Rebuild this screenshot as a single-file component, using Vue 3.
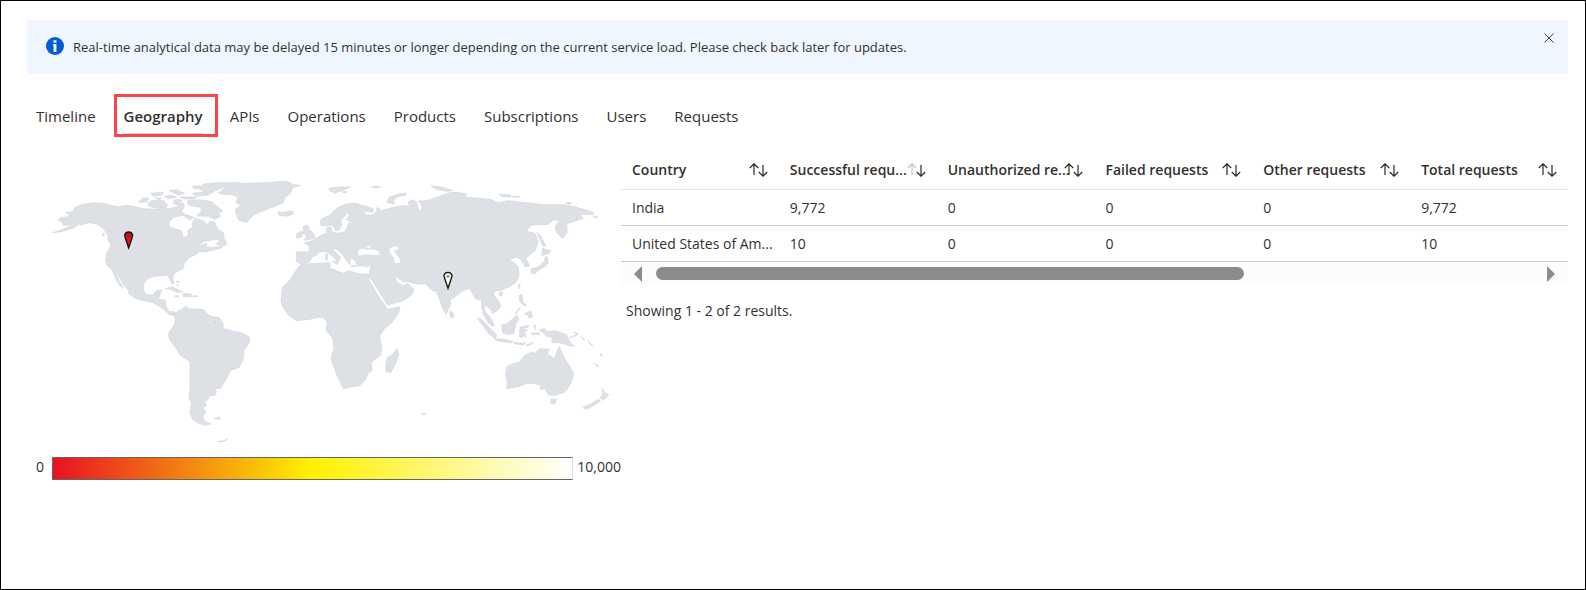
<script setup>
import { ref } from 'vue'

const tabs = ['Timeline', 'Geography', 'APIs', 'Operations', 'Products', 'Subscriptions', 'Users', 'Requests']
const activeTab = ref('Geography')
const bannerOpen = ref(true)

const columns = [
  { label: 'Country' },
  { label: 'Successful requ...', descending: true },
  { label: 'Unauthorized re...' },
  { label: 'Failed requests' },
  { label: 'Other requests' },
  { label: 'Total requests' },
]
const rows = [
  ['India', '9,772', '0', '0', '0', '9,772'],
  ['United States of Am...', '10', '0', '0', '0', '10'],
]
</script>

<template>
  <main class="page">
    <section v-if="bannerOpen" class="banner" role="status">
      <svg class="info" viewBox="0 0 18 18" aria-hidden="true">
        <circle cx="9" cy="9" r="9" fill="#015cda" />
        <path d="M7.500 3.200h3v2.600h-3zM7 7h3.400v8H7.600V8.500H7z" fill="#fff" />
      </svg>
      <p>Real-time analytical data may be delayed 15 minutes or longer depending on the current service load. Please check back later for updates.</p>
      <button class="close" type="button" aria-label="Close" @click="bannerOpen = false">
        <svg viewBox="0 0 10 10" width="10" height="10"><path d="M.5 .5l9 9M9.500 .5l-9 9" stroke="#444" fill="none" /></svg>
      </button>
    </section>

    <nav class="tabs" role="tablist">
      <button
        v-for="tab in tabs"
        :key="tab"
        type="button"
        role="tab"
        class="tab"
        :class="{ active: tab === activeTab }"
        :aria-selected="tab === activeTab"
        @click="activeTab = tab"
      ><span>{{ tab }}</span></button>
    </nav>

    <div class="content">
      <section class="geo">
        <svg class="map" viewBox="0 0 1740 810" role="img" aria-label="World map of requests">
          <g class="land">
            <path d="M38 188L60 181L85 172L95 166L70 166L65 155L54 150L62 142L80 141L90 136L77 128L100 124L105 112L125 104L160 98L195 101L215 107L235 110L260 106L285 110L310 116L345 118L375 117L410 112L415 104L428 97L433 108L425 125L437 135L420 138L400 142L388 155L386 168L400 175L425 182L430 200L440 202L445 190L442 182L458 172L456 160L466 145L490 152L503 165L510 153L525 158L532 178L550 188L553 200L545 208L515 210L490 215L470 230L500 220L498 232L520 232L548 228L545 234L520 240L500 246L480 244L465 255L448 262L433 280L430 295L400 312L398 325L402 340L396 342L388 325L384 315L365 318L345 318L325 325L312 340L310 360L320 374L340 375L348 362L365 360L360 375L355 388L375 390L378 410L388 425L400 424L408 430L400 436L390 435L375 422L360 410L340 398L310 392L285 385L265 370L267 362L255 350L245 335L232 310L228 310L236 330L245 345L250 353L238 345L228 328L222 312L215 298L202 288L197 270L200 250L208 235L215 220L205 208L203 195L190 175L170 162L145 158L125 165L115 163L105 172L88 178L60 186Z" />
            <path d="M528 222L546 204L554 206L560 222L548 228ZM186 190h8l-3 10ZM203 208l13 12 -3 4Z" />
            <path d="M325 100L335 91L370 91L382 105L377 115L345 114L325 108ZM295 97L310 83L327 85L320 96ZM332 70L370 66L366 75L340 79ZM372 79L395 76L411 82L385 86ZM388 62L410 59L434 70L415 76ZM400 92L415 88L426 92L412 105L402 101ZM420 81L470 81L465 88L430 86ZM345 83l20 2-8 6z" />
            <g transform="translate(330 0)">
              <path d="M113 92L150 89L185 95L219 124L205 128L210 140L195 148L175 139L140 138L155 122L150 112L130 108L115 105ZM105 133L132 142L120 149L105 142ZM160 42L200 38L272 38L240 48L215 55L195 62L175 75L140 79L127 70L165 65L148 56ZM125 49l25-2 4 7-20 3z" />
              <path d="M205 68L225 55L280 40L345 38L400 34L425 38L420 43L452 46L430 52L420 70L405 82L400 98L385 105L345 120L310 135L290 158L265 150L255 120L272 105L258 97L264 80L245 74L212 72Z" />
              <path d="M383 125L398 128L425 122L431 131L410 139L388 136ZM45 356L65 350L98 366L80 367L62 358ZM98 371L120 371L130 379L100 381ZM75 377h11v3h-11ZM133 377h9v3h-9ZM78 333l11 2-4 4ZM80 342l5 5-2 2Z" />
            </g>
            <g transform="translate(330 360)">
              <path d="M64 70L75 72L82 64L95 58L108 47L115 56L160 58L170 70L185 80L205 82L218 97L220 115L245 122L280 130L298 141L300 155L282 180L280 205L268 232L240 242L232 262L212 295L192 296L200 305L195 315L178 318L175 328L163 335L170 345L158 355L167 365L158 380L165 395L182 402L165 406L145 400L128 388L120 370L124 340L117 325L120 300L120 215L90 195L75 170L58 148L56 130L75 100L75 80Z" />
              <path d="M193 385L211 382L209 387L196 388Z" />
            </g>
            <g transform="translate(690 240)">
              <path d="M92 45L100 42L180 38L180 55L220 70L235 62L270 72L290 72L299 80L296 88L325 138L346 168L352 178L390 170L385 190L368 215L345 235L328 260L335 290L333 315L305 335L306 360L292 372L288 388L270 406L240 412L220 416L212 400L200 375L183 325L192 295L188 265L168 240L172 215L158 202L145 202L120 208L80 212L55 195L38 170L33 150L38 110L60 90L75 65Z" />
              <path d="M380 296L387 312L375 345L362 368L348 364L347 345L353 322L370 312ZM456 491h10v3h-10Z" />
            </g>
            <g transform="translate(690 0)">
              <path d="M79 245L118 246L118 228L103 218L125 214L145 200L160 192L172 190L167 175L182 170L186 186L200 190L225 185L232 170L235 160L260 158L238 154L230 148L241 130L230 132L212 150L215 165L208 180L198 182L190 170L185 165L165 168L152 165L152 148L180 135L200 115L225 103L255 99L285 108L310 116L308 128L280 122L286 135L308 135L318 125L322 112L335 122L350 117L380 110L400 106L418 110L415 95L430 89L440 97L446 118L455 124L455 108L445 93L470 92L500 82L520 75L540 68L560 66L590 72L585 82L620 84L660 88L685 98L715 92L770 98L820 104L880 104L920 112L968 126L970 134L930 133L940 145L910 155L890 162L892 185L878 206L858 185L856 168L869 152L850 150L835 163L785 165L768 184L795 190L805 215L795 242L775 258L768 265L779 288L765 290L753 268L738 262L716 270L730 276L745 290L747 315L740 335L720 350L692 361L672 364L672 375L684 390L693 408L685 420L668 430L660 414L642 405L645 425L660 440L673 467L660 460L646 438L637 420L634 390L617 387L598 355L575 365L542 390L540 410L528 432L518 415L500 365L485 360L468 342L440 342L415 335L400 335L372 316L380 335L400 348L412 340L432 358L425 375L400 392L352 405L340 385L318 350L298 318L292 318L298 310L303 283L280 288L262 288L256 272L242 262L240 285L232 275L215 250L195 235L187 238L212 262L205 276L190 262L172 245L150 245L140 255L125 262L118 276L95 283L79 275Z" />
              <path d="M100 170L112 165L118 178L132 192L134 205L102 211L110 200L100 188ZM80 192L95 183L100 190L94 202L80 204ZM186 273L203 275L200 284ZM167 252l5-3 1 21-6-1ZM243 287h14v3h-14ZM287 289l12-3-8 6Z" />
              <path d="M176 55L205 51L242 51L225 58L195 70L180 62ZM215 65h18l-8 4ZM305 49h28l-8 4h-12ZM350 98L358 82L385 72L410 69L408 75L380 82L370 92L375 101ZM483 48L520 52L548 62L530 64L500 58ZM688 73L720 74L725 81L695 80ZM728 79h20v3h-20ZM888 98h17l-3 4h-10ZM970 138l14 3-10 2Z" />
              <path d="M800 188L812 198L828 228L820 230L808 205ZM818 235L842 243L835 252L815 256ZM827 258L834 264L834 280L824 290L806 300L795 312L785 310L782 298L805 290L822 275ZM745 343h6l-4 14ZM688 366l10 0-3 10-7 2ZM540 422L550 430L552 440L544 444L539 434Z" />
              <path d="M748 375h9l1 20 12 12-8 0-13-12ZM762 432l20-10 6 18-10 4-6-10ZM748 413l-12 17 3 0 11-15Z" />
            </g>
            <g transform="translate(1200 300)">
              <path d="M111 144L125 148L150 175L170 195L166 208L145 190L125 162ZM128 128L140 138L158 158L158 168L145 160ZM165 208L190 207L218 214L215 219L180 214ZM222 217L250 220L256 216 252 225L225 222ZM258 226L280 217L270 225ZM185 165L200 162L220 145L230 134L236 148L228 160L222 190L205 194L188 188ZM240 172L268 166L265 171L248 176L263 180L253 187L258 202L248 195L245 204L238 200ZM281 163l6 4 0 12-4-5ZM275 189h24v4h-24Z" />
              <path d="M298 180L315 176L320 185L345 182L380 194L385 208L402 230L380 225L360 218L335 218L338 204L318 198L312 190ZM388 205L410 196L414 190L402 186L410 193 390 202ZM424 200l10 8-3 1ZM443 212l17 16-5 0ZM482 249l5 10-4 0ZM463 279l14 11-4 1Z" />
              <path d="M200 290L215 282L240 276L252 258L275 246L285 250L298 236L328 238L322 252L345 266L352 240L358 229L372 262L390 290L401 310L395 335L380 360L370 368L355 372L345 376L325 375L315 356L300 358L302 345L280 340L262 340L235 350L200 356L202 340L197 310ZM333 387L351 388L343 402L333 400ZM486 354L494 368L507 374L490 390L480 382L489 374ZM475 388L482 394L455 410L438 418L429 412L455 400Z" />
            </g>
          </g>
          <path class="islet" d="M535 815L548 813L563 806L558 811L546 815Z" />
          <g class="water" transform="translate(690 0)">
            <path d="M263 252L268 238L280 236L290 240L305 238L325 242L330 254L305 255L285 252L270 257ZM286 231l15-4 5-1-8 9ZM358 238L372 229L384 230L385 237L372 243L386 262L392 278L375 280L372 265L360 250ZM447 96l6 12-2 14-4-12Z" />
          </g>
          <g class="lakes">
            <path d="M524 453l4 3-2 5-3-3ZM938 428h4v2h-4ZM989 425h3v3h-3ZM967 504l4 5h-2Z" />
          </g>
          <g transform="translate(266 185)">
            <path class="pin" d="M0 49L-9 22Q-12 14-12 10Q-9 1 0 1Q9 1 12 10Q12 14 9 22Z" fill="#e81123" />
            <circle cx="0" cy="13" r="5" fill="#8b1a20" />
          </g>
          <g transform="translate(1224 306)">
            <path class="pin" d="M0 49L-9 22Q-12 14-12 10Q-9 1 0 1Q9 1 12 10Q12 14 9 22Z" fill="#fffff0" />
            <circle cx="0" cy="13" r="5" fill="#999" />
          </g>
        </svg>
        <div class="legend">
          <span>0</span>
          <div class="scale"></div>
          <span>10,000</span>
        </div>
      </section>

      <section class="results">
        <table>
          <thead>
            <tr>
              <th v-for="col in columns" :key="col.label" scope="col">
                <div class="head">
                  <span>{{ col.label }}</span>
                  <button type="button" class="sort" :aria-label="'Sort by ' + col.label">
                    <svg viewBox="0 0 19 14" width="19" height="14" fill="none" stroke="#292827">
                      <path d="M5 12V1M.8 5L5 .8L9.200 5" :class="{ muted: col.descending }" stroke-width="1.200" />
                      <path d="M14 2v11M9.800 9L14 13.200L18.200 9" stroke-width="1.200" />
                    </svg>
                  </button>
                </div>
              </th>
            </tr>
          </thead>
          <tbody>
            <tr v-for="row in rows" :key="row[0]">
              <td v-for="(cell, i) in row" :key="i">{{ cell }}</td>
            </tr>
          </tbody>
        </table>
        <div class="scrollbar">
          <button type="button" aria-label="Scroll left"><svg viewBox="0 0 8 16" width="8" height="16"><path d="M8 0v16L0 8z" fill="#8b8b8b" /></svg></button>
          <div class="track"><div class="thumb"></div></div>
          <button type="button" aria-label="Scroll right"><svg viewBox="0 0 8 16" width="8" height="16"><path d="M0 0v16l8-8z" fill="#8b8b8b" /></svg></button>
        </div>
        <p class="summary">Showing 1 - 2 of 2 results.</p>
      </section>
    </div>
  </main>
</template>

<style>
body { background: #fff; }
</style>

<style scoped>
.page {
  box-sizing: border-box;
  min-height: 100vh;
  padding: 19px 17px 19px 26px;
  border: 1px solid #000;
  background: #fff;
  color: #323130;
  font-family: "Open Sans", "Noto Sans", sans-serif;
  font-size: 14px;
  line-height: 20px;
}
p { margin: 0; }
button {
  padding: 0;
  border: 0;
  background: none;
  color: inherit;
  font: inherit;
  cursor: pointer;
}
svg { display: block; }

.banner {
  display: flex;
  align-items: flex-start;
  gap: 9px;
  min-height: 54px;
  box-sizing: border-box;
  padding: 17px 14px 17px 19px;
  border-radius: 2px;
  background: #eff6ff;
  font-size: 13px;
}
.info { flex: none; width: 18px; height: 18px; }
.banner p { flex: 1; }
.close { flex: none; margin-top: -4px; }

.tabs {
  display: flex;
  height: 43px;
  margin-top: 20px;
  font-size: 15px;
}
.tab {
  box-sizing: border-box;
  padding: 0 14px;
}
.tab:first-child { padding-left: 9px; }
.tab span {
  display: block;
  padding-top: 2px;
  line-height: 41px;
}
.tab.active {
  margin: 0 -2px 0 4px;
  padding: 0 12px 0 7px;
  border: 3px solid #fc4346;
  font-weight: 600;
}
.tab.active span {
  padding-top: 3px;
  border-bottom: 1px solid #b9d3f3;
  line-height: 33px;
}

.content {
  display: grid;
  grid-template-columns: 594fr 947fr;
  margin-top: 15px;
}
.map {
  width: calc(100% - 14px);
  margin: 18px 0 0 13px;
  overflow: visible;
}
.land { fill: #dde0e5; stroke: #d3d7dc; stroke-width: 2; stroke-linejoin: round; }
.islet { fill: #dde0e5; stroke: #cdd1d7; stroke-width: 2; }
.water { fill: #fff; }
.lakes { fill: #c6cacf; }
.pin { stroke: #111; stroke-width: 4; }
.legend {
  display: flex;
  align-items: flex-start;
  gap: 4px;
  margin: 17px 0 0 9px;
}
.scale {
  box-sizing: border-box;
  flex: 1;
  height: 23px;
  margin-left: 4px;
  border: 1px solid #666;
  border-right-color: #ddd;
  background: linear-gradient(to right, #e81123, #fff100 50%, #fff);
}

.results { min-width: 0; }
table {
  width: 100%;
  border-collapse: collapse;
  table-layout: fixed;
}
th, td {
  height: 35px;
  padding: 0 0 0 11px;
  border-bottom: 1px solid #c8c8c8;
  text-align: left;
  font-weight: 400;
  white-space: nowrap;
}
th {
  height: 35px;
  padding-bottom: 2px;
  border-color: #e5e5e5;
  font-weight: 600;
}
.head {
  display: flex;
  align-items: center;
  justify-content: space-between;
  padding-right: 11px;
}
.head span { flex: 1; min-width: 0; }
.sort { flex: none; }
.muted { stroke: #c8c6c4; }

.scrollbar {
  display: flex;
  align-items: center;
  gap: 14px;
  height: 23px;
  padding: 0 13px;
  background: #fcfcfc;
}
.track { flex: 1; }
.thumb { width: 67%; height: 13px; border-radius: 7px; background: #8b8b8b; }
.summary { margin: 16px 0 0 5px; }
</style>
